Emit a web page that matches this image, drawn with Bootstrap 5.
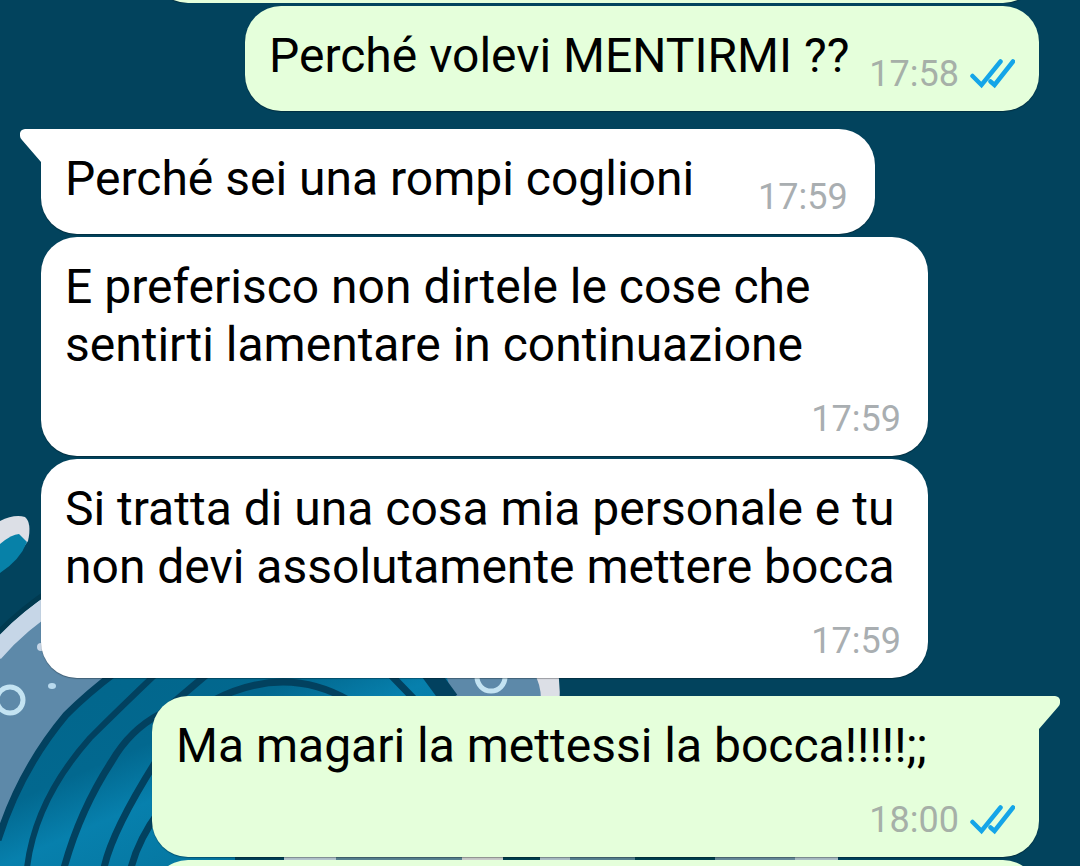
<!DOCTYPE html>
<html lang="it">
<head>
<meta charset="utf-8">
<meta name="viewport" content="width=device-width, initial-scale=1">
<title>Chat</title>
<link href="https://cdn.jsdelivr.net/npm/bootstrap@5.3.0/dist/css/bootstrap.min.css" rel="stylesheet">
<style>
body{background:#02435d;color:#000;font-family:Roboto,sans-serif;font-size:48px;line-height:58px}
.chat{padding:0 41px}
.wave{position:absolute;left:0;top:480px;z-index:0}
.bubble{position:relative;z-index:1;max-width:887px;padding:21px 27px 16px 24px;border-radius:36px;background:#fff;box-shadow:0 1px 1px rgba(0,0,0,.3)}
.bubble.sent{padding-right:24px;background:#e5ffdb}
.bubble p{margin:0 0 10px}
.bubble.tall p{margin-bottom:24px}
.cut-top{height:3px;margin-bottom:3px}
.stamp{font-size:36px;line-height:42px;color:#a9aeb1;gap:10px}
.sent .stamp{color:#a6b0a8}
.beside{margin-left:20px}
.tick{width:46px;height:30px}
.tail{position:absolute;top:0;width:22px;height:34px;fill:#fff}
.tail-in{left:-21px}
.tail-out{right:-21px;fill:#e5ffdb}
.first-in{border-top-left-radius:0}
.first-out{border-top-right-radius:0}
.next{margin-top:3px}
.turn{margin-top:18px}
</style>
</head>
<body>
<svg width="0" height="0" class="position-absolute" aria-hidden="true">
<symbol id="ticks" viewBox="0 0 46 30"><path d="M3.500 17 12.500 26 31.500 2.500M21.500 22.500 25.500 26 44 2.500" fill="none" stroke="#14a5e8" stroke-width="4.500" stroke-linecap="round"/></symbol>
</svg>
<main class="chat position-relative vh-100 overflow-hidden d-flex flex-column">
<svg class="wave" width="1080" height="386" viewBox="0 480 1080 386" aria-hidden="true">
<defs>
<linearGradient id="deep" x1="0" y1="0" x2="1" y2="1"><stop offset="0" stop-color="#02668b"/><stop offset=".35" stop-color="#02688f"/><stop offset=".5" stop-color="#0780ad"/><stop offset="1" stop-color="#036b91"/></linearGradient>
</defs>
<path d="M0 521Q14 514 25 517Q32 523 28 541L18 555 0 566Z" fill="#dcdfe6"/>
<path d="M0 544Q12 534 19 534L27 542Q20 560 0 573Z" fill="#0781a8"/>
<path d="M0 640Q40 595 90 570H400Q520 600 558 696Q540 800 640 866H0Z" fill="#5d89a9"/>
<path d="M-6 653Q20 623 60 597" fill="none" stroke="#c6d6e7" stroke-width="18"/>
<path d="M-2 633Q20 610 50 590" fill="none" stroke="#013a50" stroke-width="5"/>
<path d="M0 830Q20 780 35 756T66 715T112 670H444Q460 700 450 866H0Z" fill="url(#deep)"/>
<g fill="none" stroke="#02415f" stroke-width="7">
<path d="M-2 840Q20 770 66 715Q88 693 116 672"/>
<path d="M27 868Q35 800 90 738Q120 708 160 670" stroke-width="6"/>
<path d="M64 868Q80 810 112 761Q130 730 160 714L212 670"/>
<path d="M104 868Q112 830 160 755"/>
<path d="M131 868Q138 840 160 810"/>
<path d="M212 701Q285 663 350 701M386 670 416 701"/>
<path d="M428 670 450 700" stroke-width="18"/>
</g>
<path d="M533 670Q541 685 541 699H562V670Z" fill="#dcdfe6"/>
<path d="M557 666Q562 690 558 720H582V666Z" fill="#02435d"/>
<g fill="none" stroke="#c3e3f2" stroke-width="5"><circle cx="10" cy="700" r="13"/><circle cx="491" cy="677" r="14"/></g>
<ellipse cx="52" cy="686" rx="4" ry="3" fill="#b9daee"/><circle cx="41" cy="647" r="4" fill="#c6d6e7"/>
<g>
<path d="M235 855H284V865H235Z" fill="#023f57"/>
<path d="M284 855H336L340 865H284Z" fill="#b3c5cd"/>
<path d="M336 855H462V865H336Z" fill="#56808f"/>
<path d="M462 855H503V865H462Z" fill="#c8cbc9"/>
<path d="M503 855H540V865H503Z" fill="#023f4f"/>
<path d="M540 855H570V865H540Z" fill="#a9bdc4"/>
<path d="M570 855H635V865H570Z" fill="#56808f"/>
<path d="M635 855H715V865H635Z" fill="#023f4f"/>
<path d="M715 855H795V865H715Z" fill="#66899a"/>
<path d="M795 855H838V865H795Z" fill="#a9bdc4"/>
</g>
</svg>
<div class="cut-top d-flex flex-column justify-content-end overflow-hidden flex-shrink-0"><div class="bubble sent align-self-end w-100 py-5"></div></div>
<article class="bubble sent align-self-end d-flex align-items-end flex-shrink-0">
<p>Perché volevi MENTIRMI ??</p>
<div class="stamp beside d-flex align-items-center"><time>17:58</time><svg class="tick" role="img" aria-label="Letto"><use href="#ticks"/></svg></div>
</article>
<article class="bubble first-in turn align-self-start d-flex align-items-end flex-shrink-0">
<svg class="tail tail-in" viewBox="0 0 22 34" aria-hidden="true"><path d="M22 0H5Q-1 1 0 7Q0 9 2 11L21 33H22Z"/></svg>
<p class="me-3">Perché sei una rompi coglioni</p>
<div class="stamp ms-5"><time>17:59</time></div>
</article>
<article class="bubble tall next align-self-start d-flex flex-column flex-shrink-0">
<p>E preferisco non dirtele le cose che sentirti lamentare in continuazione</p>
<div class="stamp align-self-end"><time>17:59</time></div>
</article>
<article class="bubble tall next align-self-start d-flex flex-column flex-shrink-0">
<p>Si tratta di una cosa mia personale e tu non devi assolutamente mettere bocca</p>
<div class="stamp align-self-end"><time>17:59</time></div>
</article>
<article class="bubble tall sent first-out turn align-self-end w-100 d-flex flex-column flex-shrink-0">
<svg class="tail tail-out" viewBox="0 0 22 34" aria-hidden="true"><path d="M0 0H17Q23 1 22 7Q22 9 20 11L1 33H0Z"/></svg>
<p>Ma magari la mettessi la bocca!!!!!;;</p>
<div class="stamp d-flex align-items-center align-self-end"><time>18:00</time><svg class="tick" role="img" aria-label="Letto"><use href="#ticks"/></svg></div>
</article>
<div class="bubble sent next align-self-end w-100 py-5 flex-shrink-0"></div>
</main>
<script src="https://cdn.jsdelivr.net/npm/bootstrap@5.3.0/dist/js/bootstrap.bundle.min.js"></script>
</body>
</html>
